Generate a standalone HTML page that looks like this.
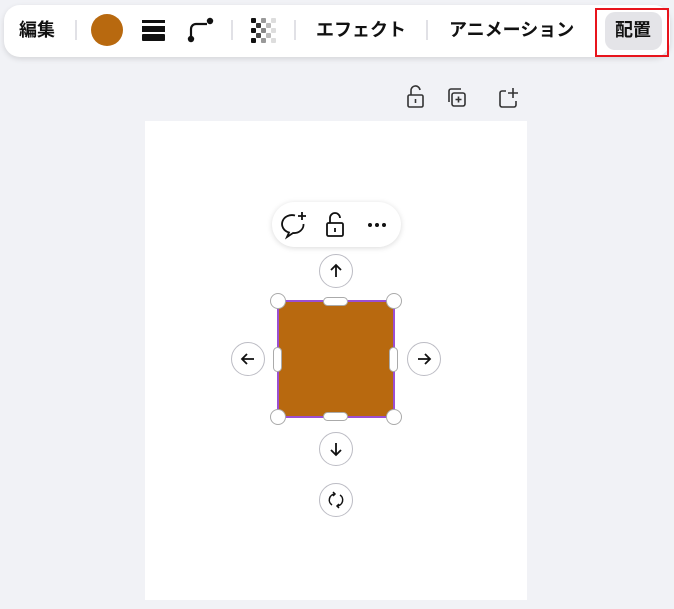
<!DOCTYPE html><html><head><meta charset="utf-8"><style>
body{margin:0;width:674px;height:609px;background:#f1f2f6;position:relative;overflow:hidden;font-family:"Liberation Sans","Noto Sans CJK JP",sans-serif;}
.a{position:absolute}
.tb{left:4px;top:5px;width:666px;height:52px;background:#fff;border-radius:16px;box-shadow:0 2px 6px rgba(0,0,0,.12)}
.t{font-weight:bold;font-size:18px;color:#111;top:18px;line-height:24px}
.sep{width:2px;height:20px;background:#e1e1e6;top:20px}
.circ{width:34px;height:34px;border-radius:50%;background:#fff;border:1px solid #bcbcc4;box-sizing:border-box;display:flex;align-items:center;justify-content:center}
.h{width:16px;height:16px;border-radius:50%;background:#fff;border:1px solid #aaa;box-sizing:border-box}
</style></head><body>
<div class="a tb"></div>
<div class="a t" style="left:19px">編集</div>
<div class="a sep" style="left:75px"></div>
<div class="a" style="left:91px;top:14px;width:32px;height:32px;border-radius:50%;background:#b8690f"></div>
<div class="a" style="left:142px;top:20px;width:23px;height:3px;background:#111"></div>
<div class="a" style="left:142px;top:26px;width:23px;height:6px;background:#111"></div>
<div class="a" style="left:142px;top:34px;width:23px;height:7px;background:#111;border-radius:1px"></div>
<svg class="a" style="left:185px;top:15px" width="32" height="30"><path d="M6 24V14a5 5 0 0 1 5-5h11" stroke="#111" stroke-width="2.2" fill="none"/><circle cx="6" cy="24" r="3.2" fill="#111"/><circle cx="25" cy="6" r="3.2" fill="#111"/></svg>
<div class="a sep" style="left:231px"></div>
<svg class="a" style="left:250px;top:17px" width="28" height="28">
<rect x="1" y="1" width="5" height="5" rx="1" fill="#111"/><rect x="11" y="1" width="5" height="5" rx="1" fill="#999"/><rect x="21" y="1" width="5" height="5" rx="1" fill="#ddd"/>
<rect x="6" y="6" width="5" height="5" rx="1" fill="#333"/><rect x="16" y="6" width="5" height="5" rx="1" fill="#bbb"/>
<rect x="1" y="11" width="5" height="5" rx="1" fill="#111"/><rect x="11" y="11" width="5" height="5" rx="1" fill="#888"/><rect x="21" y="11" width="5" height="5" rx="1" fill="#ddd"/>
<rect x="6" y="16" width="5" height="5" rx="1" fill="#444"/><rect x="16" y="16" width="5" height="5" rx="1" fill="#bbb"/>
<rect x="1" y="21" width="5" height="5" rx="1" fill="#111"/><rect x="11" y="21" width="5" height="5" rx="1" fill="#999"/><rect x="21" y="21" width="5" height="5" rx="1" fill="#ddd"/></svg>
<div class="a sep" style="left:294px"></div>
<div class="a t" style="left:316px">エフェクト</div>
<div class="a sep" style="left:426px"></div>
<div class="a t" style="left:449px">アニメーション</div>
<div class="a" style="left:605px;top:12px;width:57px;height:38px;background:#e4e4e8;border-radius:10px"></div>
<div class="a t" style="left:615px">配置</div>
<div class="a" style="left:595px;top:8px;width:70px;height:45px;border:2px solid #e8141c"></div>
<svg class="a" style="left:403px;top:84px" width="120" height="28" fill="none" stroke="#333" stroke-width="1.6">
<rect x="5" y="11" width="15" height="12" rx="1.5"/><path d="M8 11V7a4.5 4.5 0 0 1 9 -1"/><path d="M12.5 15v4"/>
<rect x="49" y="9" width="13" height="13" rx="2"/><path d="M46 18V7a2 2 0 0 1 2-2h10"/><path d="M55.5 12.5v6M52.5 15.5h6"/>
<path d="M103 7h-4a2 2 0 0 0-2 2v12a2 2 0 0 0 2 2h12a2 2 0 0 0 2-2v-4M110 4v10M105 9h10"/></svg>
<div class="a" style="left:145px;top:121px;width:382px;height:479px;background:#fff"></div>
<div class="a" style="left:272px;top:202px;width:129px;height:45px;background:#fff;border-radius:23px;box-shadow:0 1px 6px rgba(0,0,0,.15)"></div>
<svg class="a" style="left:278px;top:208px" width="120" height="34" fill="none" stroke="#111" stroke-width="1.8">
<path d="M17 7.5A9.5 8.5 0 1 0 11 24.5L9 29l6-4A9.5 8.5 0 0 0 25.5 16"/><path d="M24 4v8M20 8h8"/>
<rect x="49" y="15" width="16" height="13" rx="1.5"/><path d="M52 15v-5a5 5 0 0 1 10 0"/><path d="M57 20v4"/>
<circle cx="92" cy="17" r="2" fill="#111" stroke="none"/><circle cx="99" cy="17" r="2" fill="#111" stroke="none"/><circle cx="106" cy="17" r="2" fill="#111" stroke="none"/></svg>
<div class="a" style="left:277px;top:300px;width:118px;height:118px;background:#b8690f;border:2px solid #9b4fd1;box-sizing:border-box"></div>
<div class="a h" style="left:270px;top:293px"></div><div class="a h" style="left:386px;top:293px"></div>
<div class="a h" style="left:270px;top:409px"></div><div class="a h" style="left:386px;top:409px"></div>
<div class="a" style="left:323px;top:297px;width:25px;height:9px;border-radius:5px;background:#fff;border:1px solid #aaa;box-sizing:border-box"></div>
<div class="a" style="left:323px;top:412px;width:25px;height:9px;border-radius:5px;background:#fff;border:1px solid #aaa;box-sizing:border-box"></div>
<div class="a" style="left:273px;top:347px;width:9px;height:25px;border-radius:5px;background:#fff;border:1px solid #aaa;box-sizing:border-box"></div>
<div class="a" style="left:389px;top:347px;width:9px;height:25px;border-radius:5px;background:#fff;border:1px solid #aaa;box-sizing:border-box"></div>
<div class="a circ" style="left:319px;top:254px"><svg width="16" height="16" stroke="#111" stroke-width="1.8" fill="none"><path d="M8 14V2M3 7l5-5 5 5"/></svg></div>
<div class="a circ" style="left:231px;top:342px"><svg width="16" height="16" stroke="#111" stroke-width="1.8" fill="none"><path d="M14 8H2M7 3L2 8l5 5"/></svg></div>
<div class="a circ" style="left:407px;top:342px"><svg width="16" height="16" stroke="#111" stroke-width="1.8" fill="none"><path d="M2 8h12M9 3l5 5-5 5"/></svg></div>
<div class="a circ" style="left:319px;top:432px"><svg width="16" height="16" stroke="#111" stroke-width="1.8" fill="none"><path d="M8 2v12M3 9l5 5 5-5"/></svg></div>
<div class="a circ" style="left:319px;top:483px"><svg width="18" height="18" stroke="#111" stroke-width="1.5" fill="none"><path d="M5 14A6 6 0 0 1 8 3M6 1l2 2-2 2M13 4a6 6 0 0 1-3 11M12 17l-2-2 2-2"/></svg></div>
</body></html>
